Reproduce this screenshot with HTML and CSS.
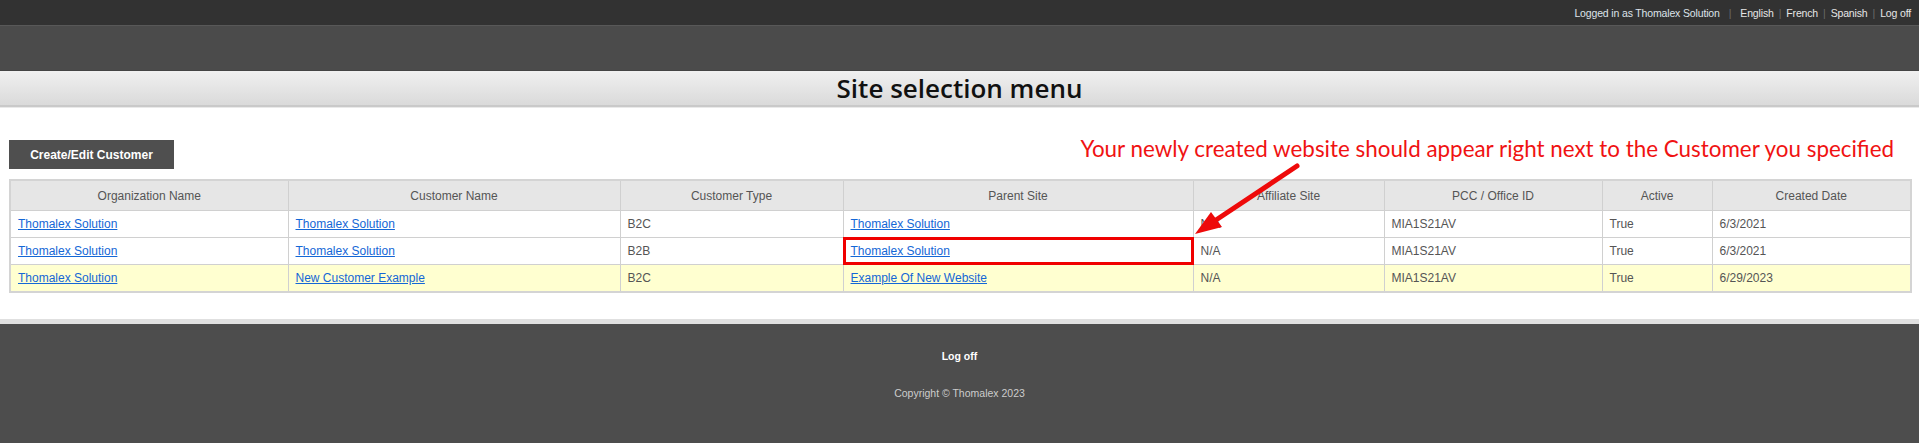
FILE: index.html
```html
<!DOCTYPE html>
<html lang="en">
<head>
  <meta charset="UTF-8">
  <meta name="viewport" content="width=device-width, initial-scale=1.0">
  <title>Site selection menu</title>
  <link rel="stylesheet" href="styles.css">
</head>
<body>
  <header class="topbar">
    <nav class="user-nav">
      <span class="user-name">Logged in as Thomalex Solution</span>
      <span class="sep wide">|</span>
      <a href="#">English</a>
      <span class="sep">|</span>
      <a href="#">French</a>
      <span class="sep">|</span>
      <a href="#">Spanish</a>
      <span class="sep">|</span>
      <a href="#">Log off</a>
    </nav>
  </header>

  <div class="brand-band"></div>

  <div class="page-title">
    <h1>Site selection menu</h1>
  </div>

  <main class="content">
    <div class="toolbar">
      <button class="btn">Create/Edit Customer</button>
    </div>

    <!-- tutorial callout drawn over the page -->
    <p class="callout">Your newly created website should appear right next to the Customer you specified</p>
    <svg class="callout-arrow" width="125" height="85" viewBox="0 0 125 85">
      <line x1="112" y1="7" x2="31" y2="61" stroke="#ee0a0a" stroke-width="5" stroke-linecap="round"/>
      <polygon points="10,75 37,68 26,53" fill="#ee0a0a"/>
    </svg>

    <table class="sites">
      <colgroup>
        <col style="width: 278px">
        <col style="width: 332px">
        <col style="width: 223px">
        <col style="width: 350px">
        <col style="width: 191px">
        <col style="width: 218px">
        <col style="width: 110px">
        <col style="width: 199px">
      </colgroup>
      <thead>
        <tr>
          <th>Organization Name</th>
          <th>Customer Name</th>
          <th>Customer Type</th>
          <th>Parent Site</th>
          <th>Affiliate Site</th>
          <th>PCC / Office ID</th>
          <th>Active</th>
          <th>Created Date</th>
        </tr>
      </thead>
      <tbody>
        <tr>
          <td><a href="#">Thomalex Solution</a></td>
          <td><a href="#">Thomalex Solution</a></td>
          <td>B2C</td>
          <td><a href="#">Thomalex Solution</a></td>
          <td>N/A</td>
          <td>MIA1S21AV</td>
          <td>True</td>
          <td>6/3/2021</td>
        </tr>
        <tr>
          <td><a href="#">Thomalex Solution</a></td>
          <td><a href="#">Thomalex Solution</a></td>
          <td>B2B</td>
          <td class="highlight"><a href="#">Thomalex Solution</a></td>
          <td>N/A</td>
          <td>MIA1S21AV</td>
          <td>True</td>
          <td>6/3/2021</td>
        </tr>
        <tr class="new-row">
          <td><a href="#">Thomalex Solution</a></td>
          <td><a href="#">New Customer Example</a></td>
          <td>B2C</td>
          <td><a href="#">Example Of New Website</a></td>
          <td>N/A</td>
          <td>MIA1S21AV</td>
          <td>True</td>
          <td>6/29/2023</td>
        </tr>
      </tbody>
    </table>
  </main>

  <footer class="footer">
    <a href="#" class="footer-link">Log off</a>
    <p class="copyright">Copyright &copy; Thomalex 2023</p>
  </footer>
</body>
</html>
```

FILE: styles.css
```css
/* Base */
body {
  margin: 0;
  font-family: 'Liberation Sans', Arial, sans-serif;
  font-size: 12px;
  color: #555555;
  background-color: #ffffff;
}

a {
  color: #1467d6;
}

/* Top bar */
.topbar {
  height: 25px;
  background-color: #323232;
  border-bottom: 1px solid #585858;
}

.user-nav {
  display: flex;
  justify-content: flex-end;
  align-items: center;
  height: 25px;
  padding-right: 8px;
  font-size: 10.5px;
  letter-spacing: -0.15px;
  color: #dde3ea;
}

.user-nav a {
  color: #e6e6e6;
  text-decoration: none;
}

.sep {
  color: #6a6a6a;
  margin: 0 5px;
}

.sep.wide {
  margin: 0 9px;
}

/* Dark band under the top bar */
.brand-band {
  height: 44px;
  background-color: #4b4b4b;
  border-bottom: 1px solid #444444;
}

/* Page title strip */
.page-title {
  height: 34px;
  background: linear-gradient(#f0f0f0, #dadada);
  border-bottom: 2px solid #c9c9c9;
  box-shadow: 0 1px 0 #e9e9e9;
  display: flex;
  align-items: center;
  justify-content: center;
}

.page-title h1 {
  margin: 0;
  font-family: 'Open Sans', sans-serif;
  font-size: 26px;
  font-weight: 600;
  color: #111111;
  line-height: 1;
}

/* Main content */
.content {
  position: relative;
  padding: 33px 9px 26px 9px;
}

.toolbar {
  margin-bottom: 10px;
}

.btn {
  display: block;
  width: 165px;
  height: 29px;
  border: none;
  background-color: #4f4f4f;
  color: #ffffff;
  font-family: 'Liberation Sans', Arial, sans-serif;
  font-size: 12px;
  font-weight: bold;
  cursor: pointer;
}

/* Callout annotation */
.callout {
  position: absolute;
  top: 29px;
  right: 25px;
  margin: 0;
  font-family: Lato, sans-serif;
  font-size: 22.4px;
  line-height: 26px;
  color: #f01212;
}

.callout-arrow {
  position: absolute;
  left: 1185px;
  top: 52px;
}

/* Sites table */
.sites {
  width: 1901px;
  border-collapse: collapse;
  table-layout: fixed;
  border: 2px solid #d4d4d4;
}

.sites th,
.sites td {
  border: 1px solid #d0d0d0;
  padding: 0 7px;
  white-space: nowrap;
}

.sites th {
  height: 29px;
  background-color: #e6e6e6;
  font-weight: normal;
  color: #555555;
  text-align: center;
}

.sites td {
  height: 26px;
  text-align: left;
}

.sites .new-row td {
  background-color: #ffffd0;
}

.sites td.highlight {
  position: relative;
}

.sites td.highlight::after {
  content: '';
  position: absolute;
  top: -1px;
  left: -1px;
  right: -1px;
  bottom: -1px;
  border: 3px solid #f00000;
}

/* Footer */
.footer {
  border-top: 5px solid #e0e0e0;
  background-color: #4d4d4d;
  height: 124px;
  padding-top: 26px;
  box-sizing: border-box;
  text-align: center;
  font-size: 10.5px;
}

.footer-link {
  color: #ffffff;
  font-weight: bold;
  text-decoration: none;
}

.copyright {
  margin: 25px 0 0;
  color: #cccccc;
}
```
